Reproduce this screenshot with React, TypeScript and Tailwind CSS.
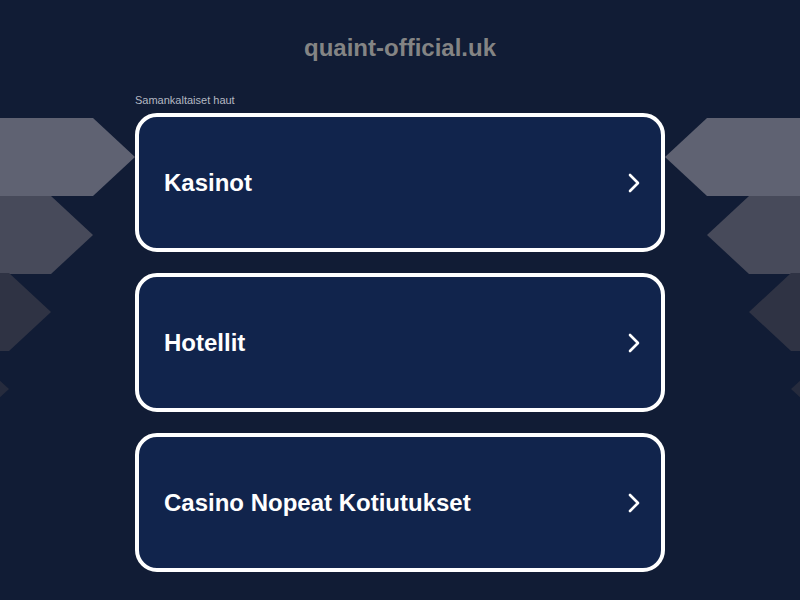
import React from 'react'

const searches = ['Kasinot', 'Hotellit', 'Casino Nopeat Kotiutukset']

// decorative arrow stacks on both sides, drawn behind the list
const arrows = [
  { y: 118, x: 93, fill: '#5f6272' },
  { y: 196, x: 51, fill: '#474a5a' },
  { y: 273, x: 9, fill: '#2f3344' },
  { y: 350, x: -33, fill: '#262b3d' },
]

const Arrows: React.FC<{ flip?: boolean }> = ({ flip }) => (
  <svg
    className={'absolute top-0 w-[140px] h-[600px] ' + (flip ? 'right-0 -scale-x-100' : 'left-0')}
    viewBox="0 0 140 600"
  >
    {arrows.map(a => (
      <polygon
        key={a.y}
        fill={a.fill}
        points={`0,${a.y} ${a.x},${a.y} ${a.x + 42},${a.y + 39} ${a.x},${a.y + 78} 0,${a.y + 78}`}
      />
    ))}
  </svg>
)

const App: React.FC = () => {
  return (
    <div className="relative h-[600px] overflow-hidden bg-[#111c35] font-['Liberation_Sans',Arial,sans-serif]">
      <Arrows />
      <Arrows flip />

      <div className="relative flex flex-col items-center">
        <h1 className="mt-[34px] text-[24px] leading-[28px] font-bold text-[#848484]">
          quaint-official.uk
        </h1>

        <div className="mt-[32px] w-[530px]">
          <p className="text-[11px] leading-[13px] text-[#b4b8c2]">Samankaltaiset haut</p>

          {/* related search cards */}
          <ul className="mt-[6px] flex flex-col gap-[21px]">
            {searches.map(s => (
              <li
                key={s}
                className="h-[139px] flex items-center justify-between pl-[25px] pr-[19px] bg-[#11244c] border-4 border-white rounded-[22px]"
              >
                <span className="text-[24px] font-bold text-white">{s}</span>
                <svg width="16" height="20" viewBox="0 0 16 20" fill="none">
                  <path d="M4 2l8 8-8 8" stroke="white" strokeWidth="2.6" strokeLinecap="round" strokeLinejoin="round" />
                </svg>
              </li>
            ))}
          </ul>
        </div>
      </div>
    </div>
  )
}

export default App
